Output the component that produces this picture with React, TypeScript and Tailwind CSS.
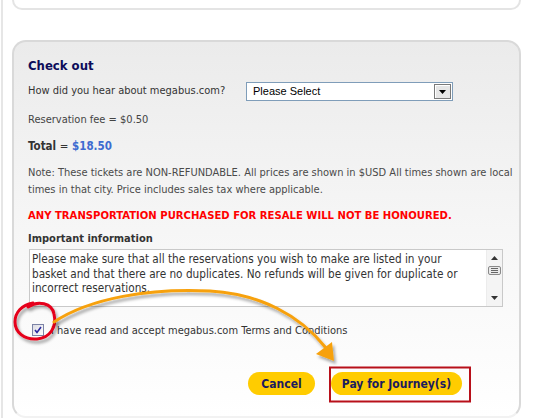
import React from "react";

export default function App() {
  return (
    <div className="relative w-[536px] h-[418px] overflow-hidden bg-white font-['DejaVu_Sans_Condensed','DejaVu_Sans',sans-serif]">
      <div className="ml-px h-full border-l-2 border-[#e6e6e6]">
        {/* top card remnant */}
        <div className="ml-[9px] w-[509px] h-[10px] rounded-b-[10px] border-2 border-t-0 border-[#e4e4e4] bg-white" />

        {/* checkout card */}
        <div className="ml-[9px] mt-[30px] w-[509px] h-[378px] rounded-[14px] border-2 border-[#d9d9d9] border-b-[#f2f2f2] bg-gradient-to-b from-[#ebebeb] via-[#f6f6f6] to-white pl-[14px]">
          <div className="pt-[16px] text-[13px] leading-[16px] font-bold text-[#0c0c5a]">Check out</div>

          <div className="mt-[8px] flex items-center h-[19px]">
            <div className="w-[218px] text-[11px] text-[#333]">How did you hear about megabus.com?</div>
            <div className="flex items-center w-[207px] h-[19px] border border-[#7f9db9] bg-white">
              <div className="flex-1 pl-[6px] text-[11px] text-black font-['Liberation_Sans',Arial,sans-serif]">Please Select</div>
              <div className="mr-px w-[17px] h-[15px] border border-[#7a7a7a] bg-[#e6e6e6] flex items-center justify-center shadow-[inset_1px_1px_0_#ffffff]">
                <svg width="7" height="4" viewBox="0 0 7 4"><polygon points="0,0 7,0 3.5,4" fill="#000" /></svg>
              </div>
            </div>
          </div>

          <div className="mt-[12px] text-[11px] leading-[14px] text-[#444]">Reservation fee = $0.50</div>

          <div className="mt-[11px] text-[11.5px] leading-[16px] font-bold text-[#333]">
            Total <span className="font-normal">=</span> <span className="text-[#3d6bd0]">$18.50</span>
          </div>

          <div className="mt-[10px] pr-[2px] text-[11px] leading-[17px] text-[#4a4a4a]">
            Note: These tickets are NON-REFUNDABLE. All prices are shown in $USD All times shown are local times in that city. Price includes sales tax where applicable.
          </div>

          <div className="mt-[11px] text-[11.2px] leading-[14px] font-bold text-[#ff0000]">
            ANY TRANSPORTATION PURCHASED FOR RESALE WILL NOT BE HONOURED.
          </div>

          <div className="mt-[9px] text-[11px] leading-[14px] font-bold text-[#333]">Important information</div>

          <div className="mt-[3px] ml-px flex w-[474px] h-[58px] border border-[#c9c9c9] bg-white">
            <div className="flex-1 pl-[2px] pr-[16px] pt-[2px] text-[11.7px] leading-[14.7px] text-[#333]">
              Please make sure that all the reservations you wish to make are listed in your basket and that there are no duplicates. No refunds will be given for duplicate or incorrect reservations.
            </div>
            <div className="w-[16px] h-full bg-[#f4f4f4] border-l border-[#ececec] flex flex-col items-center">
              <svg className="mt-[6px]" width="7" height="4" viewBox="0 0 7 4"><polygon points="3.5,0 7,4 0,4" fill="#333" /></svg>
              <div className="mt-[6px] w-[13px] h-[9px] border border-[#8a8a8a] rounded-[2px] bg-[#eaeaea] flex flex-col items-center justify-center gap-px">
                <div className="w-[7px] h-px bg-[#666]" />
                <div className="w-[7px] h-px bg-[#666]" />
                <div className="w-[7px] h-px bg-[#666]" />
              </div>
              <div className="flex-1" />
              <svg className="mb-[6px]" width="7" height="4" viewBox="0 0 7 4"><polygon points="0,0 7,0 3.5,4" fill="#333" /></svg>
            </div>
          </div>

          <div className="mt-[15px] flex items-center h-[16px]">
            <div className="ml-[4px] w-[12px] h-[12px] border border-[#7c83a6] bg-gradient-to-br from-[#dcdce4] to-white flex items-center justify-center">
              <svg width="8" height="8" viewBox="0 0 8 8"><path d="M1 4 L3 6.5 L7 1" fill="none" stroke="#2a2aa0" strokeWidth="1.6" /></svg>
            </div>
            <div className="ml-[7px] mt-[2px] text-[11px] text-[#333]">I have read and accept megabus.com Terms and Conditions</div>
          </div>

          <div className="mt-[34px] flex">
            <div className="ml-[220px] w-[67px] h-[23px] rounded-full bg-[#ffcc00] flex items-center justify-center text-[12px] font-bold text-[#1b1b5e]">Cancel</div>
            <div className="ml-[16px] w-[131px] h-[23px] rounded-full bg-[#ffcc00] flex items-center justify-center text-[12px] font-bold text-[#1b1b5e]">Pay for Journey(s)</div>
          </div>
        </div>
      </div>

      {/* annotations overlay */}
      <svg className="absolute inset-0 pointer-events-none" width="536" height="418" viewBox="0 0 536 418">
        <defs>
          <filter id="sh" x="-20%" y="-20%" width="140%" height="140%">
            <feDropShadow dx="2" dy="3" stdDeviation="1.5" floodColor="#000" floodOpacity="0.35" />
          </filter>
        </defs>
        <path d="M 28 307 C 38 300, 52 303, 54 314 C 57 327, 50 338, 37 339 C 24 340, 15 332, 15 322 C 15 312, 22 305, 33 303" fill="none" stroke="#e5001a" strokeWidth="3" strokeLinecap="round" filter="url(#sh)" />
        <g filter="url(#sh)">
          <path d="M 54 322 C 90 298, 150 288, 210 291 C 260 294, 300 315, 326 348" fill="none" stroke="#f7a10a" strokeWidth="3" strokeLinecap="round" />
          <polygon points="334,361 316,354 332,342" fill="#f7a10a" />
        </g>
        <rect x="330" y="367.5" width="140" height="34" fill="none" stroke="#b8101a" strokeWidth="2" />
      </svg>
    </div>
  );
}
